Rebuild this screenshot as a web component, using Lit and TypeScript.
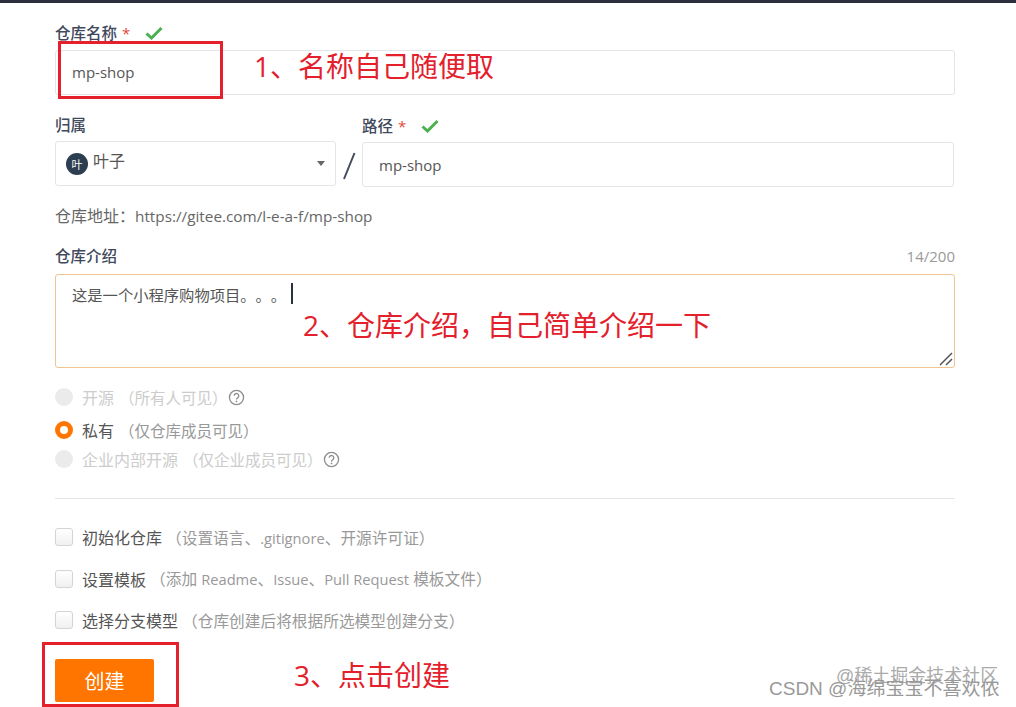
import { LitElement, html, css, svg } from "lit";
import { customElement } from "lit/decorators.js";

const check = svg`<svg class="tick" viewBox="0 0 18 14" width="18" height="14"><path d="M1.5 7.5 L6.5 12 L16.5 2" fill="none" stroke="#4caf50" stroke-width="3"/></svg>`;
const help = html`<svg class="help" viewBox="0 0 18 18" width="17" height="17"><circle cx="9" cy="9" r="7.5" fill="none" stroke="#8d8d8d" stroke-width="1.4"/><path d="M6.6 7.2a2.4 2.4 0 1 1 3.7 2c-.9.6-1.3 1-1.3 2" fill="none" stroke="#8d8d8d" stroke-width="1.4"/><circle cx="9" cy="13.2" r=".9" fill="#8d8d8d"/></svg>`;

@customElement("app-root")
export class AppRoot extends LitElement {
  static styles = css`
    :host {
      display: block;
      position: relative;
      width: 1016px;
      height: 707px;
      overflow: hidden;
      background: #fff;
      font-family: "Open Sans", "Noto Sans CJK SC", sans-serif;
      font-size: 16px;
      color: #40485b;
      text-spacing-trim: space-all;
    }
    .la { font-size: 14.7px; }
    .url { font-size: 15.3px; }
    .topbar { height: 3px; background: #2c2f3e; }
    .form { width: 900px; margin-left: 55px; display: flex; flex-direction: column; }
    .label {
      display: flex; align-items: center; height: 22px;
      font-size: 15.5px; font-weight: 500; color: #40485b; line-height: 22px;
    }
    .req { color: #e5483a; margin-left: 5px; font-size: 15px; }
    .tick { margin-left: 15px; }
    .input {
      box-sizing: border-box; height: 45px; border: 1px solid #e3e5e8; border-radius: 3px;
      display: flex; align-items: center; padding-left: 16px; color: #555; font-size: 15px;
    }
    .name-label { margin-top: 19px; }
    .name-input { margin-top: 6px; padding-bottom: 2px; }
    .owner { display: flex; margin-top: 19px; }
    .owner-col { width: 281px; display: flex; flex-direction: column; }
    .slash { width: 26px; flex: none; display: flex; align-items: flex-start; justify-content: center; padding-top: 38px; box-sizing: border-box; }
    .path-col { width: 592px; display: flex; flex-direction: column; padding-top: 1px; box-sizing: border-box; height: 77px; }
    .select { margin-top: 5px; padding-left: 10px; gap: 5px; font-size: 16px; }
    .path-input { margin-top: 5px; padding-left: 16px; }
    .avatar {
      width: 22px; height: 22px; border-radius: 50%; background: #2c3e50; color: #fff;
      font-size: 11px; display: flex; align-items: center; justify-content: center; flex: none;
    }
    .select-text { margin-top: -7px; color: #555; }
    .caret {
      margin-left: auto; margin-right: 10px; width: 0; height: 0;
      border-left: 4px solid transparent; border-right: 4px solid transparent; border-top: 5px solid #666;
    }
    .address { margin-top: 14px; height: 22px; line-height: 22px; color: #666; }
    .intro-head { margin-top: 18px; display: flex; justify-content: space-between; align-items: center; }
    .count { color: #999; font-size: 15px; font-weight: 400; }
    .textarea {
      box-sizing: border-box; margin-top: 7px; height: 94px; border: 1px solid #f0c48f; border-radius: 3px;
      padding: 9px 16px; position: relative; display: flex; align-items: flex-start; color: #555; font-size: 15.3px; line-height: 22px;
    }
    .cursor { display: inline-block; width: 2px; height: 21px; background: #2c3140; margin-left: 5px; margin-top: -1px; }
    .grip { position: absolute; right: 1px; bottom: 1px; }
    .radios { display: flex; flex-direction: column; margin-top: 18px; }
    .radio { display: flex; align-items: center; height: 22px; color: #ccc; }
    .radio.active { color: #555; margin-top: 11px; }
    .radio.tight { margin-top: 7px; }
    .dot { width: 18px; height: 18px; border-radius: 50%; background: #ebebeb; flex: none; margin-right: 9px; box-sizing: border-box; }
    .dot.on { background: #fff; border: 5px solid #ff7500; }
    .radio.active .hint { color: #999; }
    .hint { margin-left: 5px; font-size: 15.5px; }
    hr { border: 0; border-top: 1px solid #e6e6e6; margin: 28px 0 0; width: 100%; }
    .checks { display: flex; flex-direction: column; margin-top: 27px; }
    .check { display: flex; align-items: center; height: 22px; color: #555; }
    .check + .check { margin-top: 19.5px; }
    .box {
      width: 16px; height: 16px; border: 1px solid #d4d4d8; border-radius: 3px; flex: none; margin-right: 9px;
      background: linear-gradient(#fff, #f0f0f2);
    }
    .check .hint { color: #999; margin-left: 4px; font-size: 15.7px; }
    .btn {
      margin-top: 28px; width: 99px; height: 43px; background: #ff7500; border-radius: 2px; color: #fff;
      font-size: 20px; display: flex; align-items: center; justify-content: center;
    }
    .mark { position: absolute; box-sizing: border-box; border: 3px solid #e3202c; }
    .note { position: absolute; color: #e3202c; font-size: 28px; line-height: 40px; white-space: nowrap; font-family: "Noto Sans CJK SC", sans-serif; }
    .note .num { font-family: "Open Sans", sans-serif; }
    .wm { position: absolute; white-space: nowrap; color: #aaa; font-size: 18px; line-height: 22px; font-family: "Liberation Sans", "Noto Sans CJK SC", sans-serif; }
    .wm.b { color: #999; font-size: 19px; }
  `;

  render() {
    return html`
      <div class="topbar"></div>
      <div class="form">
        <div class="label name-label">仓库名称<span class="req">*</span>${check}</div>
        <div class="input name-input">mp-shop</div>
        <div class="owner">
          <div class="owner-col">
            <div class="label">归属</div>
            <div class="input select">
              <span class="avatar">叶</span><span class="select-text">叶子</span><span class="caret"></span>
            </div>
          </div>
          <div class="slash">
            <svg width="14" height="28" viewBox="0 0 14 28"><path d="M12.5 1 L2 27" stroke="#444c5c" stroke-width="2" fill="none"/></svg>
          </div>
          <div class="path-col">
            <div class="label">路径<span class="req">*</span>${check}</div>
            <div class="input path-input">mp-shop</div>
          </div>
        </div>
        <div class="address">仓库地址：<span class="url">https://gitee.com/l-e-a-f/mp-shop</span></div>
        <div class="label intro-head"><span>仓库介绍</span><span class="count">14/200</span></div>
        <div class="textarea">
          <span>这是一个小程序购物项目。。。</span><span class="cursor"></span>
          <svg class="grip" width="14" height="14" viewBox="0 0 14 14"><path d="M1 13 L13 1 M7 13 L13 7" stroke="#555" stroke-width="1.5" fill="none"/></svg>
        </div>
        <div class="radios">
          <div class="radio"><span class="dot"></span>开源<span class="hint">（所有人可见）</span>${help}</div>
          <div class="radio active"><span class="dot on"></span>私有<span class="hint">（仅仓库成员可见）</span></div>
          <div class="radio tight"><span class="dot"></span>企业内部开源<span class="hint">（仅企业成员可见）</span>${help}</div>
        </div>
        <hr />
        <div class="checks">
          <div class="check"><span class="box"></span>初始化仓库<span class="hint">（设置语言、<span class="la">.gitignore</span>、开源许可证）</span></div>
          <div class="check"><span class="box"></span>设置模板<span class="hint">（添加 <span class="la">Readme</span>、<span class="la">Issue</span>、<span class="la">Pull Request</span> 模板文件）</span></div>
          <div class="check"><span class="box"></span>选择分支模型<span class="hint">（仓库创建后将根据所选模型创建分支）</span></div>
        </div>
        <div class="btn">创建</div>
      </div>
      <div class="mark" style="left:58px;top:41px;width:165px;height:58px"></div>
      <div class="mark" style="left:42px;top:642px;width:137px;height:65px"></div>
      <div class="note" style="left:254px;top:45px"><span class="num">1</span>、名称自己随便取</div>
      <div class="note" style="left:303px;top:304px"><span class="num">2</span>、仓库介绍，自己简单介绍一下</div>
      <div class="note" style="left:294px;top:654px"><span class="num">3</span>、点击创建</div>
      <div class="wm" style="left:836px;top:665px">@稀土掘金技术社区</div>
      <div class="wm b" style="left:769px;top:678px">CSDN @海绵宝宝不喜欢侬</div>
    `;
  }
}
